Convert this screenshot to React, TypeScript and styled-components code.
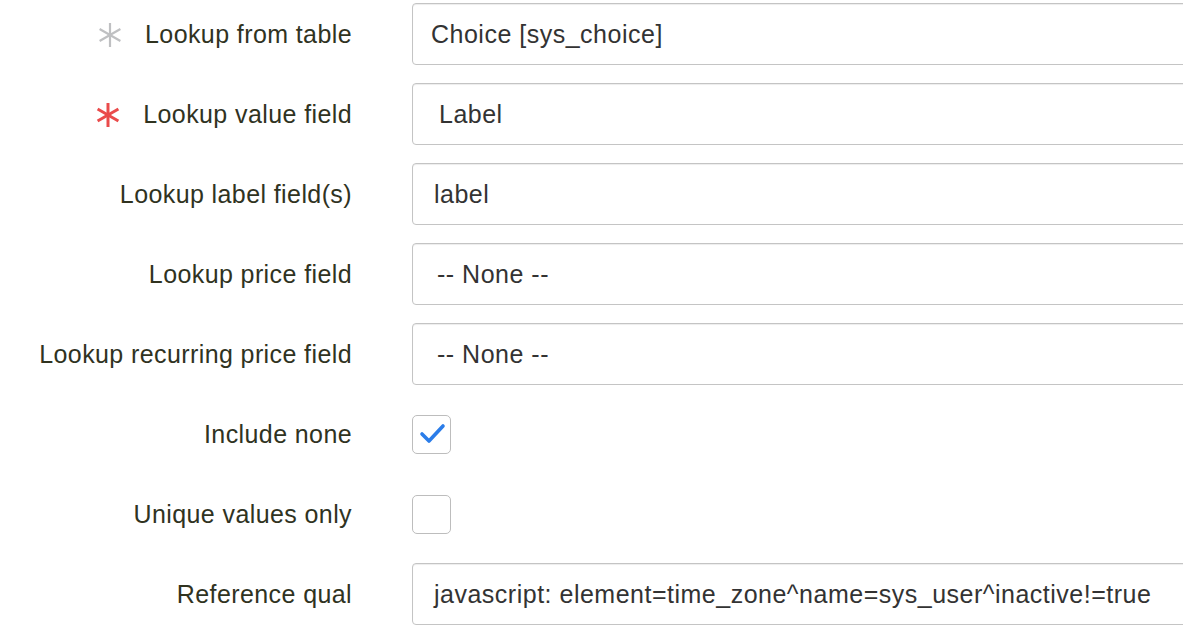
import React from "react";
import styled, { createGlobalStyle } from "styled-components";

const GlobalStyle = createGlobalStyle`
  html, body {
    margin: 0;
    padding: 0;
    background: #ffffff;
  }
  body {
    font-family: "Liberation Sans", Arial, sans-serif;
  }
`;

// the inputs run on past the right edge of the window, so the page clips them
const Page = styled.div`
  width: 100%;
  overflow: hidden;
`;

const Form = styled.div`
  display: flex;
  flex-direction: column;
  gap: 18px;
  padding-top: 3px;
  width: calc(100% + 10px);
`;

const Row = styled.div`
  display: flex;
  align-items: center;
  height: 62px;
`;

const LabelCell = styled.div`
  width: 352px;
  display: flex;
  align-items: center;
  justify-content: flex-end;
  margin-right: 60px;
  flex-shrink: 0;
`;

const LabelText = styled.label`
  font-size: 25px;
  letter-spacing: 0.4px;
  color: #30331f;
  white-space: nowrap;
  padding-top: 1px;
`;

const Star = styled.span`
  display: inline-flex;
  margin-right: 22px;
  padding-top: 2px;
`;

const Field = styled.div<{ $pad: number }>`
  flex: 1;
  height: 62px;
  box-sizing: border-box;
  border: 1px solid #c4c4c4;
  border-radius: 4px;
  box-shadow: inset 0 1px 1px rgba(0, 0, 0, 0.075);
  display: flex;
  align-items: center;
  padding-left: ${(p) => p.$pad}px;
  font-size: 25px;
  letter-spacing: 0.5px;
  color: #333333;
  white-space: nowrap;
  overflow: hidden;
`;

const Box = styled.div`
  width: 39px;
  height: 39px;
  box-sizing: border-box;
  border: 1.5px solid #bdbdbd;
  border-radius: 5px;
  display: flex;
  align-items: center;
  justify-content: center;
`;

const Asterisk = ({ color, weight }: { color: string; weight: number }) => (
  <svg width="26" height="26" viewBox="0 0 26 26">
    <g stroke={color} strokeWidth={weight} strokeLinecap="butt">
      <line x1="13" y1="1" x2="13" y2="25" />
      <line x1="2.6" y1="7" x2="23.4" y2="19" />
      <line x1="2.6" y1="19" x2="23.4" y2="7" />
    </g>
  </svg>
);

const Check = () => (
  <svg width="30" height="24" viewBox="0 0 30 24">
    <polyline
      points="5,12 12,19 26,4"
      fill="none"
      stroke="#2b7de9"
      strokeWidth="3.6"
      strokeLinecap="round"
      strokeLinejoin="round"
    />
  </svg>
);

type FieldRow = {
  label: string;
  star?: "gray" | "red";
  value?: string;
  pad?: number;
  checkbox?: boolean;
  checked?: boolean;
};

const rows: FieldRow[] = [
  { label: "Lookup from table", star: "gray", value: "Choice [sys_choice]", pad: 18 },
  { label: "Lookup value field", star: "red", value: "Label", pad: 26 },
  { label: "Lookup label field(s)", value: "label", pad: 21 },
  { label: "Lookup price field", value: "-- None --", pad: 24 },
  { label: "Lookup recurring price field", value: "-- None --", pad: 24 },
  { label: "Include none", checkbox: true, checked: true },
  { label: "Unique values only", checkbox: true, checked: false },
  {
    label: "Reference qual",
    value: "javascript: element=time_zone^name=sys_user^inactive!=true",
    pad: 21,
  },
];

const App = () => (
  <Page>
    <GlobalStyle />
    <Form>
      {rows.map((r) => (
        <Row key={r.label}>
          <LabelCell>
            {r.star && (
              <Star>
                {r.star === "gray" ? (
                  <Asterisk color="#bfc0c2" weight={2.2} />
                ) : (
                  <Asterisk color="#ea4b4b" weight={3} />
                )}
              </Star>
            )}
            <LabelText>{r.label}</LabelText>
          </LabelCell>
          {r.checkbox ? (
            <Box>{r.checked && <Check />}</Box>
          ) : (
            <Field $pad={r.pad ?? 20}>{r.value}</Field>
          )}
        </Row>
      ))}
    </Form>
  </Page>
);

export default App;
